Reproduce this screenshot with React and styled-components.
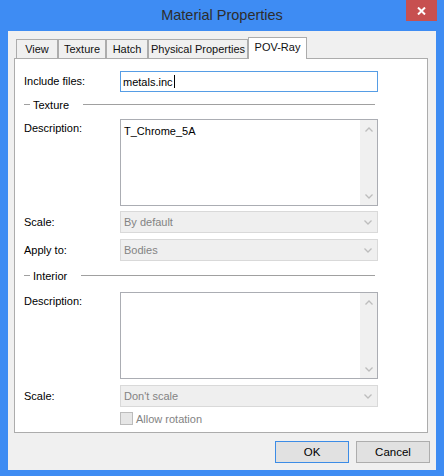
import React from 'react';
import styled, { createGlobalStyle } from 'styled-components';

const GlobalStyle = createGlobalStyle`
  html, body {
    margin: 0;
    padding: 0;
    overflow: hidden;
    background: #3e8cf3;
  }
  * {
    box-sizing: border-box;
  }
`;

const Window = styled.div`
  width: 444px;
  height: 476px;
  background: #3e8cf3;
  display: flex;
  flex-direction: column;
  font-family: 'Liberation Sans', Arial, sans-serif;
  font-size: 11px;
  color: #000;
`;

const TitleBar = styled.div`
  height: 31px;
  display: grid;
  grid-template-columns: 1fr auto 1fr;
  align-items: start;
`;

const Title = styled.div`
  grid-column: 2;
  padding-top: 7px;
  font-size: 14.5px;
  line-height: 17px;
  color: #2d2d2d;
`;

const CloseButton = styled.div`
  grid-column: 3;
  justify-self: end;
  margin-right: 7px;
  width: 31px;
  height: 21px;
  background: #c75050;
  display: flex;
  align-items: center;
  justify-content: center;
`;

const Client = styled.div`
  flex: 1;
  margin: 0 8px 6px 8px;
  background: #f0f0f0;
  padding: 6px 0 0 6px;
  display: flex;
  flex-direction: column;
`;

const TabStrip = styled.div`
  display: flex;
  align-items: flex-end;
  height: 21px;
  padding-left: 2px;
  position: relative;
  z-index: 1;
`;

const Tab = styled.div`
  width: ${({ $w }) => $w}px;
  height: ${({ $active }) => ($active ? 22 : 19)}px;
  margin-bottom: ${({ $active }) => ($active ? -1 : 0)}px;
  border: 1px solid #acacac;
  border-bottom: ${({ $active }) => ($active ? 'none' : '0')};
  background: ${({ $active }) => ($active ? '#fff' : '#f0f0f0')};
  display: flex;
  align-items: center;
  justify-content: center;
  padding-bottom: ${({ $active }) => ($active ? 3 : 0)}px;
  color: #111;
  white-space: nowrap;
`;

const Panel = styled.div`
  width: 414px;
  height: 375px;
  border: 1px solid #acacac;
  background: #fff;
  padding: 12px 0 0 9px;
  display: flex;
  flex-direction: column;
`;

const FieldRow = styled.div`
  display: grid;
  grid-template-columns: 96px 258px;
  align-items: ${({ $top }) => ($top ? 'start' : 'center')};
  margin-top: ${({ $mt }) => $mt || 0}px;
`;

const Label = styled.div`
  line-height: 13px;
  padding-top: ${({ $top }) => ($top ? 3 : 0)}px;
`;

const TextInput = styled.div`
  height: 21px;
  border: 1px solid #569de5;
  display: flex;
  align-items: center;
  padding-left: 2px;
`;

const Caret = styled.span`
  display: inline-block;
  width: 1px;
  height: 13px;
  background: #000;
  margin-left: 1px;
`;

const Separator = styled.div`
  width: 351px;
  height: 13px;
  display: flex;
  align-items: center;
  margin: ${({ $mt }) => $mt}px 0 ${({ $mb }) => $mb}px 0;
`;

const Rule = styled.div`
  height: 0;
  border-top: 1px solid #a0a0a0;
  flex: ${({ $short }) => ($short ? '0 0 6px' : '1')};
  margin: ${({ $short }) => ($short ? '0 3px 0 0' : '0 0 0 14px')};
`;

const TextArea = styled.div`
  height: 87px;
  border: 1px solid #abadb3;
  display: flex;
`;

const TextAreaContent = styled.div`
  flex: 1;
  padding: 5px 0 0 3px;
  line-height: 13px;
`;

const ScrollBar = styled.div`
  width: 17px;
  background: #f0f0f0;
  display: flex;
  flex-direction: column;
  justify-content: space-between;
  align-items: center;
  padding: 7px 0 6px 0;
`;

const Combo = styled.div`
  height: 22px;
  border: 1px solid #d9d9d9;
  background: #efefef;
  color: #838383;
  display: flex;
  align-items: center;
  justify-content: space-between;
  padding: 0 5px 0 3px;
`;

const CheckRow = styled.div`
  display: flex;
  align-items: center;
  margin: 5px 0 0 96px;
  color: #838383;
  gap: 3px;
`;

const CheckBox = styled.div`
  width: 13px;
  height: 13px;
  border: 1px solid #bcbcbc;
  background: #e6e6e6;
`;

const ButtonRow = styled.div`
  display: flex;
  justify-content: flex-end;
  gap: 7px;
  margin-top: 8px;
  padding-right: 6px;
`;

const Button = styled.div`
  width: 74px;
  height: 22px;
  border: 1px solid ${({ $default }) => ($default ? '#3c8ce6' : '#adadad')};
  background: #e1e1e1;
  display: flex;
  align-items: center;
  justify-content: center;
  font-size: 11.5px;
`;

const Chevron = ({ up }) => (
  <svg width="8" height="5" viewBox="0 0 8 5">
    <polyline
      points={up ? '0.5,4.5 4,1 7.5,4.5' : '0.5,0.5 4,4 7.5,0.5'}
      fill="none"
      stroke="#bdbdbd"
      strokeWidth="1.3"
    />
  </svg>
);

const tabs = [
  { label: 'View', w: 42 },
  { label: 'Texture', w: 48 },
  { label: 'Hatch', w: 42 },
  { label: 'Physical Properties', w: 100 },
  { label: 'POV-Ray', w: 59, active: true },
];

function Memo({ text }) {
  return (
    <TextArea>
      <TextAreaContent>{text}</TextAreaContent>
      <ScrollBar>
        <Chevron up />
        <Chevron />
      </ScrollBar>
    </TextArea>
  );
}

function Select({ value }) {
  return (
    <Combo>
      <span>{value}</span>
      <Chevron />
    </Combo>
  );
}

export default function App() {
  return (
    <>
      <GlobalStyle />
      <Window>
        <TitleBar>
          <Title>Material Properties</Title>
          <CloseButton>
            <svg width="9" height="8" viewBox="0 0 9 8">
              <path d="M1 0.5 L8 7.5 M8 0.5 L1 7.5" stroke="#fff" strokeWidth="2" />
            </svg>
          </CloseButton>
        </TitleBar>
        <Client>
          <TabStrip>
            {tabs.map((t) => (
              <Tab key={t.label} $w={t.w} $active={t.active}>
                {t.label}
              </Tab>
            ))}
          </TabStrip>
          <Panel>
            <FieldRow>
              <Label>Include files:</Label>
              <TextInput>
                metals.inc<Caret />
              </TextInput>
            </FieldRow>

            <Separator $mt={6} $mb={8}>
              <Rule $short />
              <span>Texture</span>
              <Rule />
            </Separator>

            <FieldRow $top>
              <Label $top>Description:</Label>
              <Memo text="T_Chrome_5A" />
            </FieldRow>
            <FieldRow $mt={5}>
              <Label>Scale:</Label>
              <Select value="By default" />
            </FieldRow>
            <FieldRow $mt={6}>
              <Label>Apply to:</Label>
              <Select value="Bodies" />
            </FieldRow>

            <Separator $mt={8} $mb={10}>
              <Rule $short />
              <span>Interior</span>
              <Rule />
            </Separator>

            <FieldRow $top>
              <Label $top>Description:</Label>
              <Memo text="" />
            </FieldRow>
            <FieldRow $mt={6}>
              <Label>Scale:</Label>
              <Select value="Don't scale" />
            </FieldRow>
            <CheckRow>
              <CheckBox />
              <span>Allow rotation</span>
            </CheckRow>
          </Panel>
          <ButtonRow>
            <Button $default>OK</Button>
            <Button>Cancel</Button>
          </ButtonRow>
        </Client>
      </Window>
    </>
  );
}
